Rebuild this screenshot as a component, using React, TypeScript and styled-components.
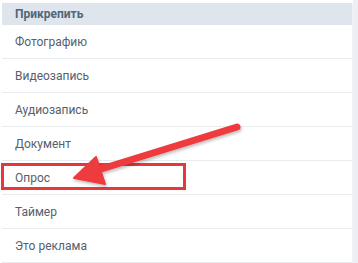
import React from "react";
import styled, { createGlobalStyle } from "styled-components";

const Global = createGlobalStyle`
  html, body {
    margin: 0;
    padding: 0;
    background: #fff;
  }
  body {
    font-family: Roboto, "Liberation Sans", Arial, sans-serif;
  }
`;

const Page = styled.div`
  position: relative;
  width: 358px;
  height: 263px;
  overflow: hidden;
  display: flex;
  background: #fff;
`;

const Panel = styled.div`
  margin: 3px 0 0 2px;
  width: 350px;
  display: flex;
  flex-direction: column;
  border-right: 1px solid #f1f2f5;
`;

const Strip = styled.div`
  flex: 1;
  background: #edeff4;
`;

const Header = styled.div`
  height: 22px;
  display: flex;
  align-items: center;
  padding-left: 13px;
  background: #dfe5ec;
  color: #536679;
  font-size: 12px;
  font-weight: 700;
`;

const Row = styled.div`
  height: 33px;
  display: flex;
  align-items: center;
  padding-left: 13px;
  border-bottom: 1px solid #e9ebef;
  color: #56606d;
  font-size: 12px;
`;

const Highlight = styled.div`
  position: absolute;
  left: 1px;
  top: 163px;
  width: 179px;
  height: 21px;
  border: 3px solid #e5383d;
`;

const Arrow = styled.svg`
  position: absolute;
  left: 0;
  top: 0;
  pointer-events: none;
`;

const items = [
  "Фотографию",
  "Видеозапись",
  "Аудиозапись",
  "Документ",
  "Опрос",
  "Таймер",
  "Это реклама",
];

export default function App() {
  return (
    <>
      <Global />
      <Page>
        <Panel>
          <Header>Прикрепить</Header>
          {items.map((t) => (
            <Row key={t}>{t}</Row>
          ))}
        </Panel>
        <Strip />
        <Highlight />
        <Arrow width="358" height="263" viewBox="0 0 358 263">
          <defs>
            <filter id="sh" x="-10%" y="-30%" width="120%" height="160%">
              <feDropShadow dx="1" dy="2" stdDeviation="1.5" floodColor="#000" floodOpacity="0.25" />
            </filter>
          </defs>
          <g filter="url(#sh)" fill="#ee3a3e" stroke="#ee3a3e">
            <line x1="237" y1="127" x2="98" y2="170" strokeWidth="7" strokeLinecap="round" />
            <polygon points="74,178 96,157 105,184" strokeWidth="2" strokeLinejoin="round" />
          </g>
        </Arrow>
      </Page>
    </>
  );
}
